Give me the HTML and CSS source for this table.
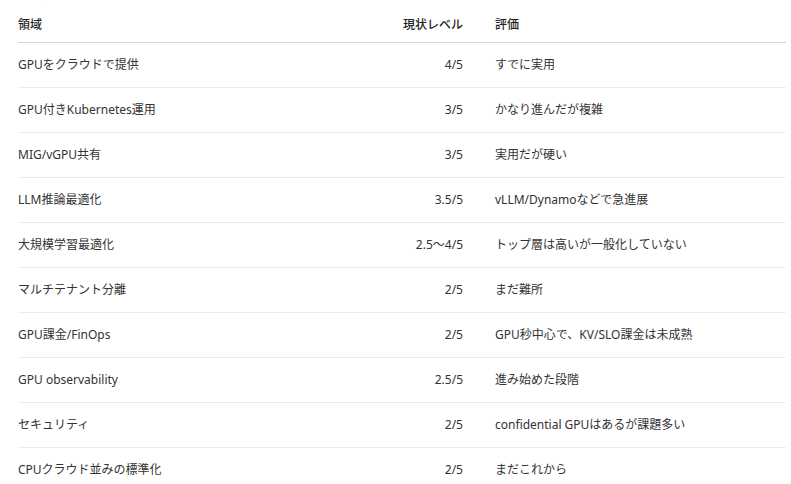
FILE: index.html
```html
<!DOCTYPE html>
<html lang="ja">
<head>
<meta charset="utf-8">
<link rel="stylesheet" href="styles.css">
</head>
<body>
<div class="page">
  <h3 class="title">成熟度の総合評価</h3>
  <table class="grid">
    <thead>
      <tr><th class="c1">領域</th><th class="c2">現状レベル</th><th class="c3">評価</th></tr>
    </thead>
    <tbody>
      <tr><td class="c1">GPUをクラウドで提供</td><td class="c2">4/5</td><td class="c3">すでに実用</td></tr>
      <tr><td class="c1">GPU付きKubernetes運用</td><td class="c2">3/5</td><td class="c3">かなり進んだが複雑</td></tr>
      <tr><td class="c1">MIG/vGPU共有</td><td class="c2">3/5</td><td class="c3">実用だが硬い</td></tr>
      <tr><td class="c1">LLM推論最適化</td><td class="c2">3.5/5</td><td class="c3">vLLM/Dynamoなどで急進展</td></tr>
      <tr><td class="c1">大規模学習最適化</td><td class="c2">2.5〜4/5</td><td class="c3">トップ層は高いが一般化していない</td></tr>
      <tr><td class="c1">マルチテナント分離</td><td class="c2">2/5</td><td class="c3">まだ難所</td></tr>
      <tr><td class="c1">GPU課金/FinOps</td><td class="c2">2/5</td><td class="c3">GPU秒中心で、KV/SLO課金は未成熟</td></tr>
      <tr><td class="c1">GPU observability</td><td class="c2">2.5/5</td><td class="c3">進み始めた段階</td></tr>
      <tr><td class="c1">セキュリティ</td><td class="c2">2/5</td><td class="c3">confidential GPUはあるが課題多い</td></tr>
      <tr><td class="c1">CPUクラウド並みの標準化</td><td class="c2">2/5</td><td class="c3">まだこれから</td></tr>
    </tbody>
  </table>
</div>
</body>
</html>
```
FILE: styles.css
```css
html, body {
  margin: 0;
  padding: 0;
  background: #ffffff;
}
body {
  font-family: "Noto Sans", "Noto Sans CJK JP", sans-serif;
  font-size: 12px;
  color: #333333;
}
.page {
  padding: 0 5px 0 18px;
}
.title {
  margin: -18px 0 0 25px;
  height: 20px;
  font-size: 15px;
  line-height: 20px;
  font-weight: 700;
  color: #222222;
  overflow: hidden;
}
.grid {
  width: 768px;
  border-collapse: collapse;
  table-layout: fixed;
  margin-top: 6px;
}
.grid th {
  font-weight: 500;
  color: #1f1f1f;
  text-align: left;
  padding: 8px 16px;
  line-height: 18px;
  border-bottom: 1px solid #d6d6d6;
}
.grid td {
  padding: 13px 16px;
  line-height: 18px;
  border-bottom: 1px solid #ececec;
}
.grid tbody tr:last-child td {
  border-bottom: none;
}
.grid .c1 {
  width: 352px;
  padding-left: 0;
}
.grid .c2 {
  width: 61px;
  text-align: right;
}
.grid .c3 {
  width: 275px;
}
```
